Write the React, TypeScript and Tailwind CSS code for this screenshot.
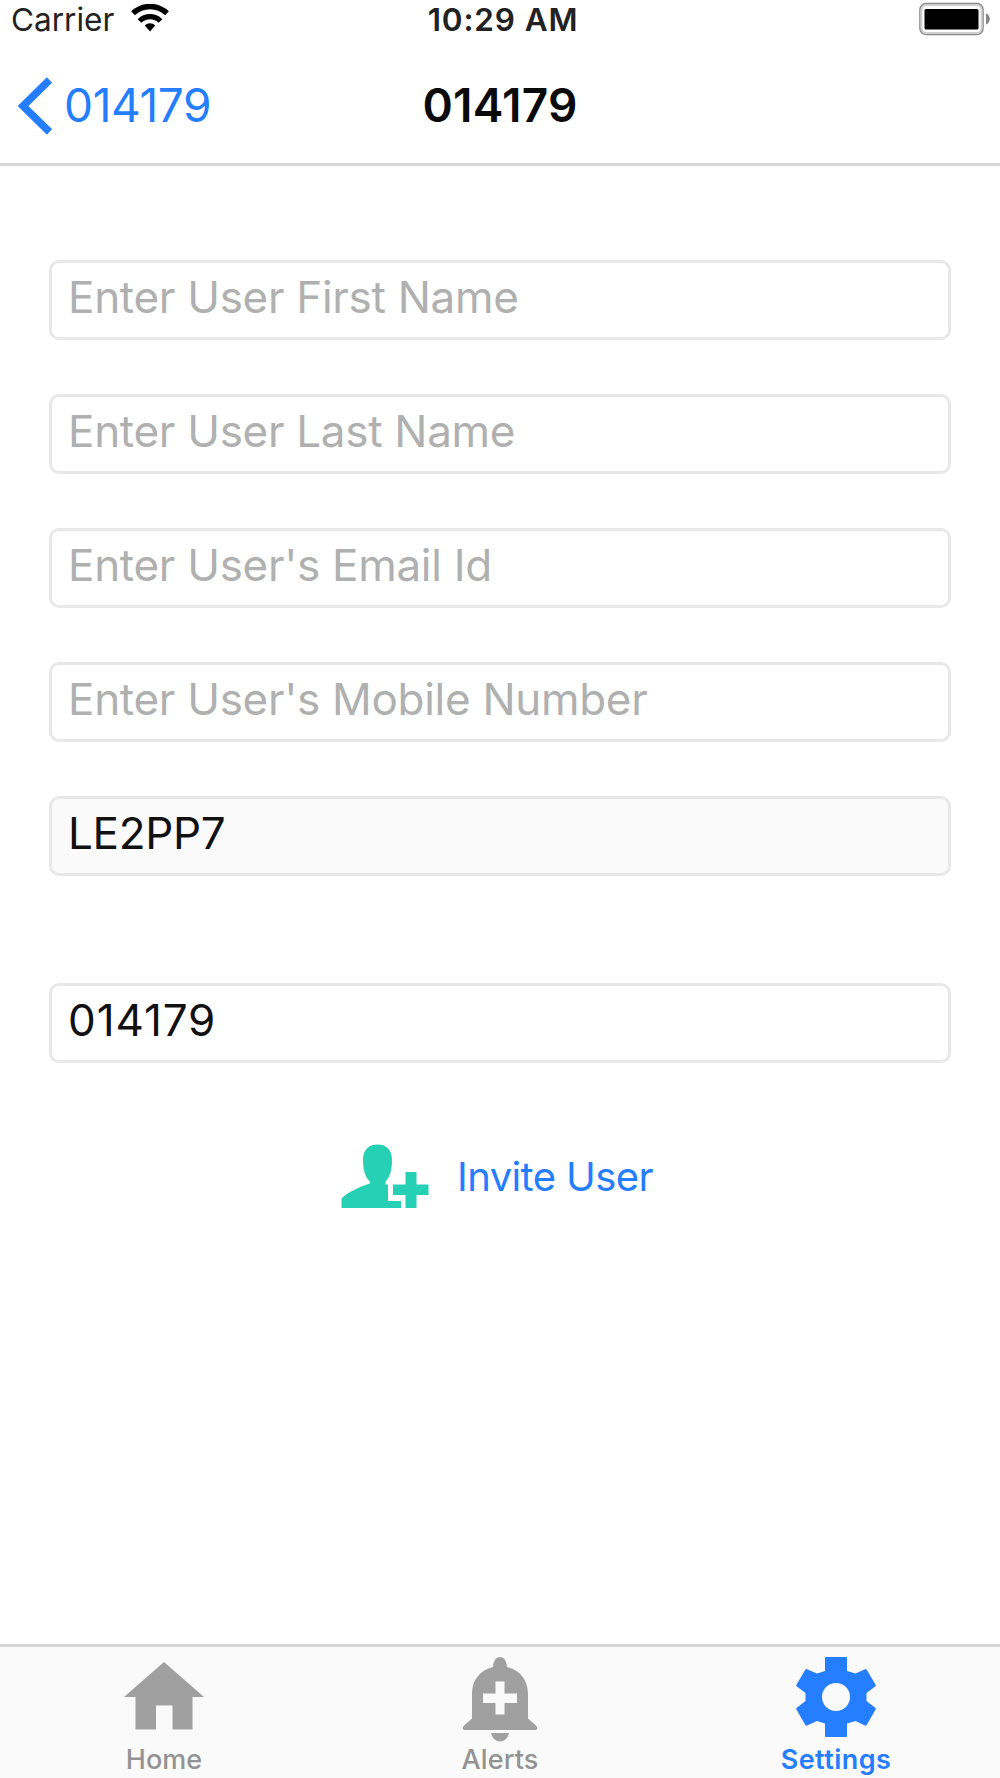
import type { ReactNode } from "react";

function WifiIcon() {
  return (
    <svg width="38" height="28" viewBox="0 0 38 28" className="mb-1 ml-[17px]">
      <path d="M2 9.300C11.500 0.200 26.500 0.200 36 9.300" fill="none" stroke="#000" strokeWidth="5.4" />
      <path d="M8.500 17C14.500 11.200 23.500 11.200 29.500 17" fill="none" stroke="#000" strokeWidth="5.2" />
      <path d="M13.800 21.600C16.800 18.600 21.200 18.600 24.200 21.600L19 27.500z" />
    </svg>
  );
}

function BatteryIcon() {
  return (
    <svg width="72" height="34" viewBox="0 0 72 34" className="mb-[3px]">
      <rect x="1" y="1.500" width="63" height="31" rx="6" fill="none" stroke="#8a8a8a" strokeWidth="1.6" />
      <rect x="2.4" y="3" width="60.2" height="28" rx="5" fill="none" stroke="#cfcfcf" strokeWidth="2" />
      <rect x="5.5" y="7" width="54" height="20.500" rx="1.5" />
      <path d="M67 11.500c5 1.500 5 9.500 0 11z" fill="#858585" />
    </svg>
  );
}

function AddUserIcon() {
  return (
    <svg width="88" height="66" viewBox="0 0 88 66" fill="#26d0b5">
      <path d="M36.500 0.500C46 0.500 51 6.500 51 16C51 26 49 33 44.500 37.500V40.500H47V57H60V64H0.500V55.500C1 51 22 41 29 39.500V37.500C24 33 22 26 22 16C22 6.500 27 0.500 36.500 0.500Z" />
      <path d="M64.500 28H75.500V40.500H87.500V51H75.500V64H64.500V51H52V40.500H64.500Z" />
    </svg>
  );
}

function HomeIcon() {
  return (
    <svg width="82" height="82" viewBox="0 0 82 82" fill="#a0a0a0">
      <path d="M41 5L81 40H69.500V72.500H49.500V48.500H33V72.500H12.500V40H1Z" />
    </svg>
  );
}

function BellIcon() {
  return (
    <svg width="78" height="88" viewBox="0 0 78 88" fill="#a0a0a0">
      <path
        fillRule="evenodd"
        d="M39 0C43 0 45.500 3.500 46 10C59 13 67 23 67 37V61.500L75.500 69Q77.500 73 74.500 73H3.500Q0.500 73 2.500 69L11 61.500V37C11 23 19 13 32 10C32.500 3.500 35 0 39 0ZM34.500 24.500V36.500H22V46H34.500V57.500H43.500V46H56V36.500H43.500V24.500Z"
      />
      <path d="M30 76H48C47 81 43 84.500 39 84.500C35 84.500 31 81 30 76Z" />
    </svg>
  );
}

function GearIcon() {
  return (
    <svg width="82" height="82" viewBox="0 1 82 82" fill="#247eff">
      <path
        fillRule="evenodd"
        d="M30 2Q30 1 31 1H51Q52 1 52 2V15L60.500 17.500L70 13.200Q71 12.700 71.700 13.700L80.700 29Q81 29.700 80.500 30.200L71.500 37V45L80.500 52Q81 52.500 80.700 53.200L71.700 69Q71 70 70 69.500L60.500 65L52 67.500V80Q52 81 51 81H31Q30 81 30 80V67.500L22 65L12 69.500Q11 70 10.300 69L1.300 53.200Q1 52.500 1.500 52L10.500 45V37L1.500 30.200Q1 29.700 1.300 29L10.300 13.700Q11 12.700 12 13.200L22 17.500L30 15ZM41 27A14 14 0 1 0 41 55A14 14 0 1 0 41 27Z"
      />
    </svg>
  );
}

type FieldProps = {
  placeholder?: string;
  value?: string;
  disabled?: boolean;
  className?: string;
};

function Field({ placeholder, value, disabled, className = "tracking-[-0.300px]" }: FieldProps) {
  return (
    <input
      type="text"
      placeholder={placeholder}
      defaultValue={value}
      disabled={disabled}
      className={`h-20 w-full rounded-[10px] border-[3px] border-[#e8e8e8] bg-white pb-1.5 pl-4 text-[44px] text-[#111] placeholder:text-[#b0b0b0] disabled:bg-[#fafafa] ${className}`}
    />
  );
}

function Tab({ label, icon, active }: { label: string; icon: ReactNode; active?: boolean }) {
  return (
    <button className="flex w-80 flex-col items-center pt-2.5">
      <span className="flex h-[87px] items-start">{icon}</span>
      <span
        className={`text-[27px] leading-8 ${active ? "font-semibold tracking-[0.450px] text-[#247eff]" : "font-medium tracking-[0.100px] text-[#939393]"}`}
      >
        {label}
      </span>
    </button>
  );
}

export default function App() {
  return (
    <div className="flex h-[1778px] w-[1000px] flex-col overflow-hidden bg-white font-['Inter',sans-serif]">
      <header className="border-b-[3px] border-[#d6d6d6]">
        {/* Status bar */}
        <div className="grid h-10 grid-cols-3 items-center pr-[9px] pl-[11px]">
          <div className="flex items-center text-[31.5px] leading-10 text-[#222]">
            <span>Carrier</span>
            <WifiIcon />
          </div>
          <span className="pl-1 text-center text-[31.5px] leading-10 font-semibold tracking-[0.850px] whitespace-nowrap text-[#222]">
            10:29 AM
          </span>
          <div className="flex justify-end">
            <BatteryIcon />
          </div>
        </div>

        {/* Navigation bar */}
        <div className="grid h-[123px] grid-cols-3 items-center px-[17px] pt-2">
          <button className="flex items-center text-[46px] tracking-[-0.350px] text-[#247eff]">
            <svg width="37" height="58" viewBox="0 0 37 58" className="mr-2.5" fill="none" stroke="#247eff" strokeWidth="7.500">
              <path d="M32.500 3L6 29L32.500 55" />
            </svg>
            014179
          </button>
          <h1 className="text-center text-[46px] font-semibold tracking-[0.200px] text-[#0a0a0a]">014179</h1>
        </div>
      </header>

      <main className="flex flex-1 flex-col items-center px-[49px] pt-[94px]">
        <div className="flex w-full flex-col gap-[54px]">
          <Field placeholder="Enter User First Name" />
          <Field placeholder="Enter User Last Name" />
          <Field placeholder="Enter User's Email Id" />
          <Field placeholder="Enter User's Mobile Number" />
          <Field value="LE2PP7" disabled />
        </div>
        <div className="mt-[107px] w-full">
          <Field value="014179" className="tracking-[0.900px]" />
        </div>
        <button className="mt-[81px] mr-1.5 flex items-center gap-[28px] text-[40px] tracking-[-0.600px] text-[#247eff]">
          <AddUserIcon />
          Invite User
        </button>
      </main>

      <nav className="flex h-[134px] gap-4 border-t-[3px] border-[#d6d6d6] bg-[#fafafa] pl-1">
        <Tab label="Home" icon={<HomeIcon />} />
        <Tab label="Alerts" icon={<BellIcon />} />
        <Tab label="Settings" icon={<GearIcon />} active />
      </nav>
    </div>
  );
}
